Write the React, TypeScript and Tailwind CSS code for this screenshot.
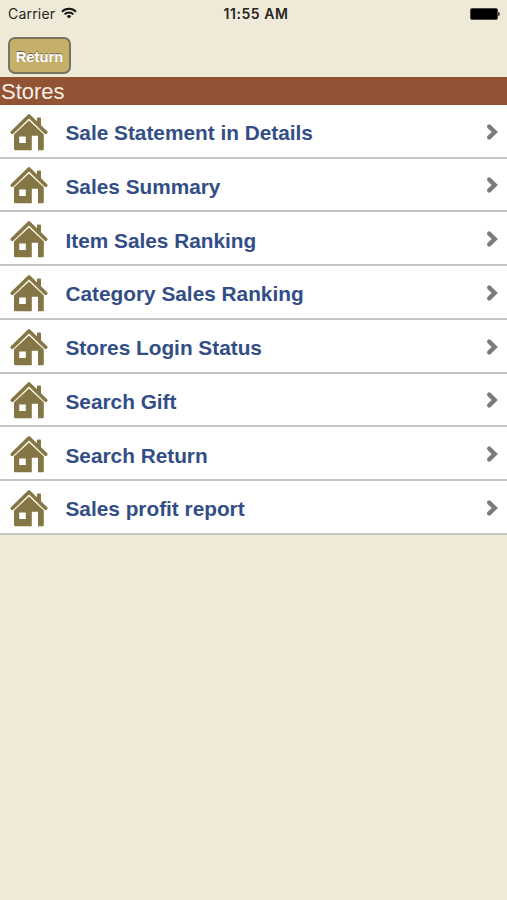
const items = [
  "Sale Statement in Details",
  "Sales Summary",
  "Item Sales Ranking",
  "Category Sales Ranking",
  "Stores Login Status",
  "Search Gift",
  "Search Return",
  "Sales profit report",
];

function HouseIcon() {
  return (
    <svg viewBox="0 0 38 38" className="w-[38px] h-[38px] shrink-0" fill="#857645">
      <path d="M27 5.3q0-.8.8-.8h2.4q.8 0 .8.8v8.5L27 10z" />
      <path
        d="M2.3 19.2 19 3 35.7 19.2"
        fill="none"
        stroke="#857645"
        strokeWidth="3.6"
        strokeLinecap="round"
        strokeLinejoin="round"
      />
      <path
        fillRule="evenodd"
        d="M19 7.4 33.8 21.6V36q0 1.2-1.2 1.2H28V22.7h-6.2V37.2H5.2Q4 37.2 4 36V21.6zM9.2 23.4v6.6h6.6v-6.6z"
      />
      <path d="M4 20.9 19 6.4 34 20.9" fill="none" stroke="#efe8cd" strokeWidth="1" />
    </svg>
  );
}

function ChevronIcon() {
  return (
    <svg viewBox="0 0 12 18" className="w-3 h-[18px] shrink-0" fill="none">
      <path
        d="M3.2 3.6 8.8 9 3.2 14.4"
        stroke="#7b7b7b"
        strokeWidth="4.3"
        strokeLinecap="round"
      />
    </svg>
  );
}

function WifiIcon() {
  return (
    <svg viewBox="0 0 16 12" className="w-4 h-3 -mt-0.5" fill="none" stroke="#171511" strokeWidth="2">
      <path d="M1 4.7a10 10 0 0 1 14 0" />
      <path d="M3.6 7.4a6.2 6.2 0 0 1 8.8 0" />
      <path d="M8 11.6 5.7 9.3a3.2 3.2 0 0 1 4.6 0z" fill="#171511" stroke="none" />
    </svg>
  );
}

function StatusBar() {
  return (
    <div className="grid grid-cols-3 items-center h-[27px] pl-2 pr-[7px] text-[#28251f] font-[Inter,sans-serif]">
      <div className="flex items-center gap-[6px] text-[14px] leading-none tracking-[0.2px]">
        <span>Carrier</span>
        <WifiIcon />
      </div>
      <div className="text-center text-[14px] leading-none font-semibold tracking-[0.55px] whitespace-nowrap pl-1">
        11:55 AM
      </div>
      <div className="flex items-center justify-end">
        <div className="w-[28px] h-[12px] rounded-[2px] bg-black border border-[#4b483f]" />
        <div className="w-[2px] h-1 rounded-r-full bg-[#4b483f]" />
      </div>
    </div>
  );
}

export default function App() {
  return (
    <div className="w-full min-h-screen bg-[#efe9d8] font-['Liberation_Sans',Arial,sans-serif]">
      <StatusBar />
      <div className="h-[49.75px] pt-[10px] pl-2">
        <button className="block w-[63px] h-[37px] rounded-[7px] border-2 border-[#77735f] bg-[#c6b069] text-[14.8px] leading-none font-bold text-white [text-shadow:0_-1px_0_#6b6658] pt-[3px]">
          Return
        </button>
      </div>
      <h1 className="h-[28px] pl-px bg-[#915333] text-[#f7eee5] text-[22px] leading-[29px]">
        Stores
      </h1>
      <ul>
        {items.map((item) => (
          <li
            key={item}
            className="flex items-center h-[53.75px] pt-[2px] pl-[10px] pr-[9px] bg-white border-b-2 border-[#c5c5c5]"
          >
            <HouseIcon />
            <span className="flex-1 pl-[17.5px] pt-[3px] text-[20.8px] leading-6 font-bold text-[#334e86]">
              {item}
            </span>
            <ChevronIcon />
          </li>
        ))}
      </ul>
    </div>
  );
}
